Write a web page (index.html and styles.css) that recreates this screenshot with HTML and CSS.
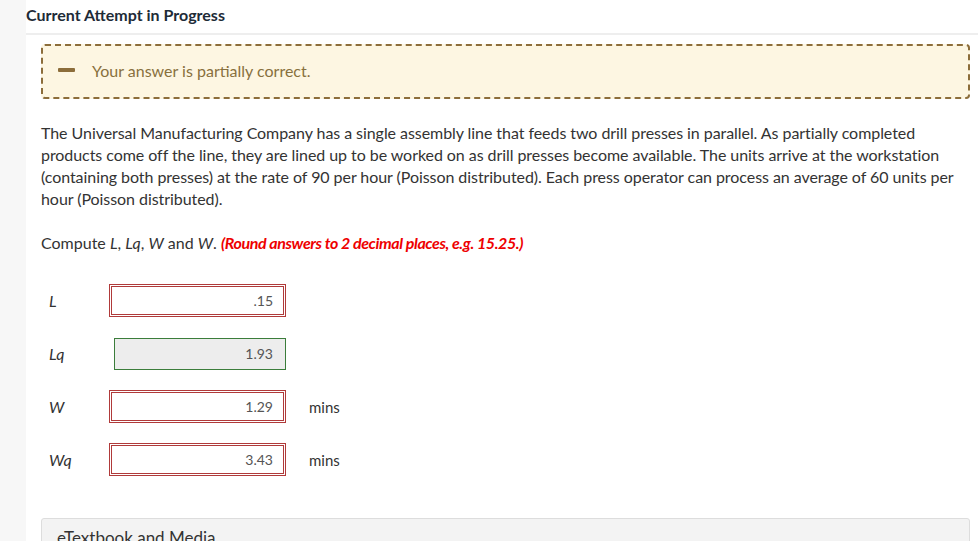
FILE: index.html
```html
<!DOCTYPE html>
<html>
<head>
<meta charset="utf-8">
<link rel="stylesheet" href="styles.css">
</head>
<body>
<div class="sidebar"></div>
<div class="main">
  <div class="page-header">Current Attempt in Progress</div>
  <div class="content">
    <div class="alert">
      <span class="alert-icon"></span>
      <span class="alert-text">Your answer is partially correct.</span>
    </div>
    <p class="question">The Universal Manufacturing Company has a single assembly line that feeds two drill presses in parallel. As partially completed products come off the line, they are lined up to be worked on as drill presses become available. The units arrive at the workstation (containing both presses) at the rate of 90 per hour (Poisson distributed). Each press operator can process an average of 60 units per hour (Poisson distributed).</p>
    <p class="prompt">Compute <i>L</i>, <i>Lq</i>, <i>W</i> and <i>W</i>. <b class="note">(Round answers to 2 decimal places, e.g. 15.25.)</b></p>
    <div class="answers">
      <div class="row">
        <span class="label"><i>L</i></span>
        <span class="field"><span class="box wrong">.15</span></span>
      </div>
      <div class="row">
        <span class="label"><i>Lq</i></span>
        <span class="field"><span class="box right">1.93</span></span>
      </div>
      <div class="row">
        <span class="label"><i>W</i></span>
        <span class="field"><span class="box wrong">1.29</span></span>
        <span class="unit">mins</span>
      </div>
      <div class="row">
        <span class="label"><i>Wq</i></span>
        <span class="field"><span class="box wrong">3.43</span></span>
        <span class="unit">mins</span>
      </div>
    </div>
    <div class="media">eTextbook and Media</div>
  </div>
</div>
</body>
</html>
```
FILE: styles.css
```css
html, body {
  margin: 0;
  padding: 0;
  background: #fff;
}
body {
  display: flex;
  height: 541px;
  font-family: Lato, "Open Sans", sans-serif;
  color: #333;
  overflow: hidden;
}
.sidebar {
  width: 26px;
  flex: none;
  background: #f7f7f7;
}
.main {
  flex: 1;
  min-width: 0;
}
.page-header {
  font-size: 16px;
  font-weight: bold;
  color: #1e2b37;
  line-height: 20px;
  padding-top: 5px;
  height: 28px;
  border-bottom: 2px solid #eeeeee;
}
.content {
  padding: 9px 8px 0 15px;
}
.alert {
  height: 51px;
  border: 2px dashed #8c6d3a;
  border-radius: 4px;
  background: #fdf6e2;
  display: flex;
  align-items: center;
  padding-left: 15px;
}
.alert-icon {
  width: 17px;
  height: 4px;
  border-radius: 1px;
  background: #8c6d3a;
  margin-top: -4px;
}
.alert-text {
  margin-left: 17px;
  margin-top: -2px;
  font-size: 16px;
  color: #88703d;
}
.question {
  margin: 23px 0 0;
  font-size: 16px;
  line-height: 22px;
  color: #333;
  letter-spacing: -0.06px;
}
.prompt {
  margin: 22px 0 0;
  font-size: 16px;
  line-height: 22px;
}
.note {
  color: #ee0000;
  font-style: italic;
  letter-spacing: -0.4px;
}
.answers {
  margin-top: 30px;
  display: flex;
  flex-direction: column;
  gap: 20px;
}
.row {
  display: flex;
  align-items: center;
  height: 33px;
}
.label {
  width: 60px;
  padding-left: 8px;
  font-size: 16px;
}
.field {
  width: 177px;
  display: flex;
  justify-content: flex-end;
}
.box {
  box-sizing: border-box;
  height: 33px;
  display: flex;
  align-items: center;
  justify-content: flex-end;
  padding-right: 12px;
  font-size: 14px;
  color: #555;
}
.box.wrong {
  width: 177px;
  border: 1px solid #b03a3a;
  box-shadow: inset 0 0 0 1px #ffffff, inset 0 0 0 2px #b03a3a;
  background: #fff;
}
.box.right {
  width: 172px;
  height: 32px;
  border: 1px solid #3b7d3b;
  background: #ededed;
}
.unit {
  margin-left: 23px;
  font-size: 15px;
  color: #333;
}
.media {
  margin-top: 42px;
  border: 1px solid #dddddd;
  border-radius: 3px 3px 0 0;
  background: #f3f3f3;
  height: 40px;
  padding: 8px 15px 0;
  font-size: 17px;
  color: #333;
}
```
